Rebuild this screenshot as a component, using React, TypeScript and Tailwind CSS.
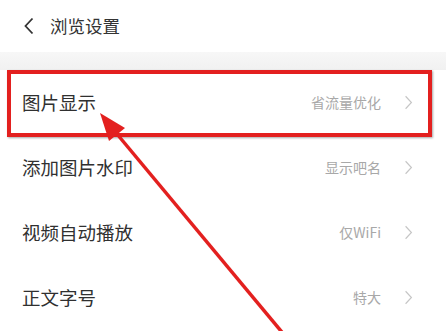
import React from "react";

// Rows of the "浏览设置" page — label on the left, current value + chevron on the right.
const ROWS = [
  { label: "图片显示", value: "省流量优化" },
  { label: "添加图片水印", value: "显示吧名" },
  { label: "视频自动播放", value: "仅WiFi" },
  { label: "正文字号", value: "特大" },
];

function Chevron({ className }: { className?: string }) {
  return (
    <svg viewBox="0 0 10 18" className={className} fill="none" stroke="currentColor" strokeWidth="1.4">
      <path d="M1.5 1.5 L8.5 9 L1.5 16.5" />
    </svg>
  );
}

export default function App() {
  return (
    <div
      className="relative h-[331px] w-[446px] overflow-hidden bg-white"
      style={{ fontFamily: '"Noto Sans CJK SC", "Noto Sans", sans-serif' }}
    >
      {/* Header */}
      <div className="flex h-[52px] items-center pl-[24px]">
        <svg viewBox="0 0 10 18" className="h-[18px] w-[10px] text-[#333]" fill="none" stroke="currentColor" strokeWidth="1.8">
          <path d="M8.5 1.5 L1.5 9 L8.5 16.5" />
        </svg>
        <span className="ml-[16px] text-[17.5px] text-[#333]">浏览设置</span>
      </div>
      <div className="h-[18px] bg-gradient-to-b from-[#f7f7f7] to-[#f1f1f1]" />

      {/* Settings list */}
      <div>
        {ROWS.map((r) => (
          <div key={r.label} className="flex h-[65px] items-center pl-[22px] pr-[33px]">
            <span className="text-[18.5px] text-[#303030]">{r.label}</span>
            <span className="ml-auto text-[14px] text-[#a8a8a8]">{r.value}</span>
            <Chevron className="ml-[23px] h-[15px] w-[9px] text-[#c6c6c6]" />
          </div>
        ))}
      </div>

      {/* Highlight box on the first row */}
      <div className="absolute left-[7px] top-[70px] h-[67px] w-[425px] border-[4px] border-[#e3201f] shadow-[1px_1px_2px_rgba(0,0,0,0.35)]" />

      {/* Pointing arrow */}
      <svg className="pointer-events-none absolute left-0 top-0" width="446" height="331" viewBox="0 0 446 331">
        <line x1="112" y1="128" x2="286" y2="337" stroke="#e3201f" strokeWidth="3.5" />
        <polygon points="100,113 109,141 125,128" fill="#e3201f" />
      </svg>
    </div>
  );
}
